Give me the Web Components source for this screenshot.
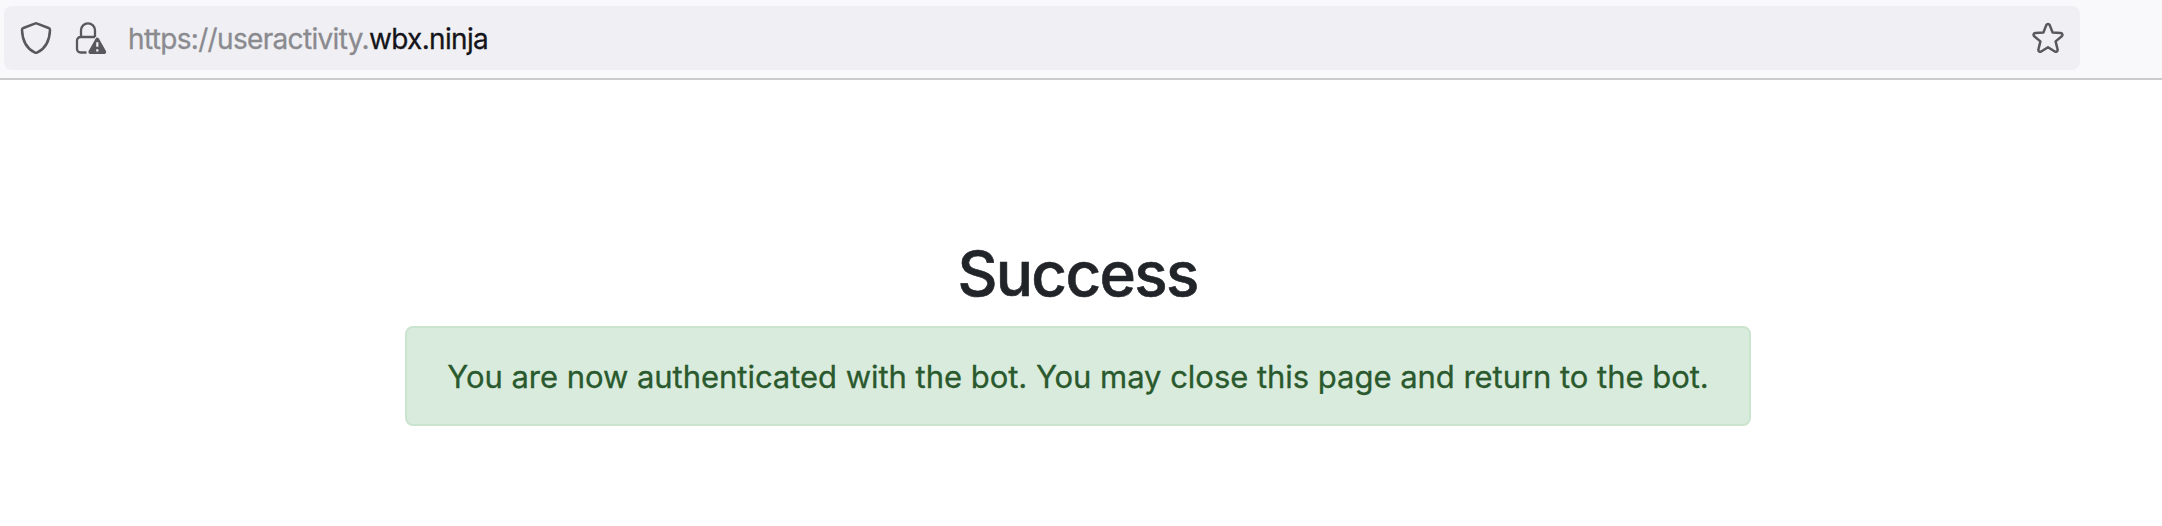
<!DOCTYPE html>
<html lang="en">
<head>
<meta charset="utf-8">
<title>Success</title>
<style>
html, body { margin: 0; height: 100%; background: #fff; }
body { font-family: Inter, "Liberation Sans", sans-serif; overflow: hidden; }
</style>
</head>
<body>
<app-window></app-window>
<script>
const define = (name, html) => customElements.define(name, class extends HTMLElement {
  constructor() {
    super();
    this.attachShadow({ mode: 'open' }).innerHTML = html;
  }
});

define('shield-icon', `
<style>:host{display:block;width:34px;height:36px}svg{display:block}</style>
<svg width="34" height="36" viewBox="19 20 34 36" fill="none" stroke="#58585e" stroke-width="2.5" stroke-linejoin="round">
<path d="M34.8 23.6a3 3 0 0 1 2.4 0L48.6 28a2 2 0 0 1 1.4 2.1C49.6 40 45.5 48.4 37.4 52.4a3 3 0 0 1-2.8 0C26.5 48.4 22.4 40 22 30.1A2 2 0 0 1 23.4 28Z"/>
</svg>`);

define('lock-warning-icon', `
<style>:host{display:block;width:34px;height:36px}svg{display:block}</style>
<svg width="34" height="36" viewBox="74 20 34 36" fill="none">
<path d="M81 37V30.300a7 7 0 0 1 14 0V37M86.500 52.500H80.500a3.500 3.500 0 0 1-3.500-3.500V40.500a3.500 3.500 0 0 1 3.500-3.500H95" stroke="#58585e" stroke-width="2.300"/>
<path d="M97.300 39.700 104.200 52H90.400Z" fill="#58585e" stroke="#58585e" stroke-width="4" stroke-linejoin="round"/>
<path d="M97.300 42.300V46.800M97.300 49.200V51.400" stroke="#f0f0f4" stroke-width="2.200"/>
</svg>`);

define('star-icon', `
<style>:host{display:block;width:36px;height:36px}svg{display:block}</style>
<svg width="36" height="36" viewBox="2030 20 36 36" fill="none" stroke="#58585e" stroke-width="2.500" stroke-linejoin="round">
<path d="M2046.300 25.100a1.850 1.850 0 0 1 3.400 0L2052.600 32.500 2060.700 33a1.850 1.850 0 0 1 1.100 3.200L2055.600 41.400 2057.600 49.500a1.850 1.850 0 0 1-2.800 2L2048 47.300 2041.200 51.500a1.850 1.850 0 0 1-2.800-2L2040.400 41.400 2034.200 36.200a1.850 1.850 0 0 1 1.100-3.200L2043.400 32.500Z"/>
</svg>`);

define('url-bar', `
<style>
:host{display:flex;box-sizing:border-box;height:80px;padding:6px 82px 8px 4px;background:#f9f9fb;border-bottom:2px solid #cbcbce}
.field{display:flex;align-items:center;box-sizing:border-box;flex:1;height:64px;padding:0 14px 0 15px;border-radius:8px;background:#f0f0f4}
lock-warning-icon{margin-left:21px}
.url{flex:1;margin-left:20px;padding-top:2px;font-size:28px;line-height:36px;letter-spacing:-.67px;white-space:nowrap;color:#8a8a8f;-webkit-text-stroke:.3px currentColor}
.host{color:#15141a}
</style>
<div class="field"><shield-icon></shield-icon><lock-warning-icon></lock-warning-icon>
<div class="url"><slot></slot><span class="host"><slot name="host"></slot></span></div>
<star-icon></star-icon></div>`);

define('page-heading', `
<style>
:host{display:block}
h2{margin:0;font-size:62px;line-height:76px;font-weight:500;letter-spacing:-1.7px;color:#212529;text-align:center;-webkit-text-stroke:.6px currentColor}
</style><h2><slot></slot></h2>`);

define('success-alert', `
<style>
:host{display:flex;align-items:center;justify-content:center;box-sizing:border-box;width:1346px;height:100px;padding-top:2px;border:2px solid #c9e5ce;border-radius:8px;background:#d9ebdc;color:#29592d;font-size:31px;line-height:48px;letter-spacing:-.035px;white-space:nowrap;-webkit-text-stroke:.3px currentColor}
</style><span><slot></slot></span>`);

define('app-window', `
<style>
:host{display:block}
main{display:flex;flex-direction:column;align-items:center;padding:156px 6px 0 0}
page-heading{padding-right:1px}
success-alert{margin-top:14px}
</style>
<url-bar>https://useractivity.<span slot="host">wbx.ninja</span></url-bar>
<main>
<page-heading>Success</page-heading>
<success-alert role="alert">You are now authenticated with the bot. You may close this page and return to the bot.</success-alert>
</main>`);
</script>
</body>
</html>
